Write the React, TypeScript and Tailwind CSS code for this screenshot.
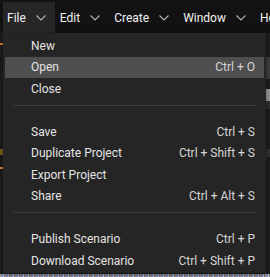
import React from "react";

const Chevron = () => (
  <svg width="10" height="6" viewBox="0 0 10 6" className="shrink-0">
    <polyline points="0.5,0.5 5,5 9.5,0.5" fill="none" stroke="#b5b5b5" strokeWidth="1.1" />
  </svg>
);

const menus = ["File", "Edit", "Create", "Window", "Help"];

type Item = { label: string; shortcut?: string; active?: boolean } | "sep";

const items: Item[] = [
  { label: "New" },
  { label: "Open", shortcut: "Ctrl + O", active: true },
  { label: "Close" },
  "sep",
  { label: "Save", shortcut: "Ctrl + S" },
  { label: "Duplicate Project", shortcut: "Ctrl + Shift + S" },
  { label: "Export Project" },
  { label: "Share", shortcut: "Ctrl + Alt + S" },
  "sep",
  { label: "Publish Scenario", shortcut: "Ctrl + P" },
  { label: "Download Scenario", shortcut: "Ctrl + Shift + P" },
];

export default function App() {
  return (
    <div
      className="relative w-[270px] h-[277px] overflow-hidden bg-[#1b1b1b] text-[12px]"
      style={{ fontFamily: "Roboto, 'Liberation Sans', sans-serif" }}
    >
      {/* top bar */}
      <div className="flex h-[33px] bg-[#121212] pl-[3px] pt-[2px] whitespace-nowrap">
        {menus.map((m, i) => (
          <div
            key={m}
            className={`flex items-center gap-[10px] pl-[4px] pr-[9px] text-[#f2f2f2] ${i === 0 ? "bg-[#262626]" : ""} ${i === 0 ? "" : "ml-[1px]"}`}
          >
            <span>{m}</span>
            <Chevron />
          </div>
        ))}
      </div>

      {/* background app content peeking around the menu */}
      <div className="flex h-[241px]">
        <div className="w-[3px] bg-[#1e1e1e] flex flex-col">
          <div className="h-[10px]" />
          <div className="h-[2px] bg-[#d98b1c]" />
          <div className="h-[104px]" />
          <div className="h-[6px] bg-[#8a5a1a]" />
          <div className="h-[12px]" />
          <div className="h-[2px] bg-[#d98b1c]" />
        </div>
        <div className="flex-1" />
        <div className="w-[4px] flex flex-col bg-[#1e1e1e]">
          <div className="h-[24px]" />
          <div className="h-[22px] bg-[#404040]" />
          <div className="h-[10px]" />
          <div className="h-[12px] bg-[#9a9a9a]" />
          <div className="h-[8px] bg-[#2f2f2f]" />
          <div className="h-[40px]" />
          <div className="h-[8px] bg-[#333333]" />
        </div>
      </div>
      <div className="h-[3px] bg-[repeating-linear-gradient(90deg,#c9a66b_0px,#6b7fd1_2px,#e0e0e0_4px,#1b1b1b_5px)]" />

      {/* dropdown menu */}
      <div className="absolute left-[3px] top-[33px] w-[263px] bg-[#252525] py-[2px] shadow-[0_2px_6px_rgba(0,0,0,0.5)]">
        {items.map((it, idx) =>
          it === "sep" ? (
            <div key={idx} className="mt-[5px] mb-[15px] mx-[10px] h-px bg-[#3e3e3e]" />
          ) : (
            <div
              key={idx}
              className={`mx-[2px] h-[21.6px] flex items-center justify-between pl-[26px] pr-[9px] ${it.active ? "bg-[#4f4f4f]" : ""}`}
            >
              <span className="text-[#e4e4e4]">{it.label}</span>
              {it.shortcut && <span className="text-[#d6d6d6]">{it.shortcut}</span>}
            </div>
          )
        )}
      </div>
    </div>
  );
}
